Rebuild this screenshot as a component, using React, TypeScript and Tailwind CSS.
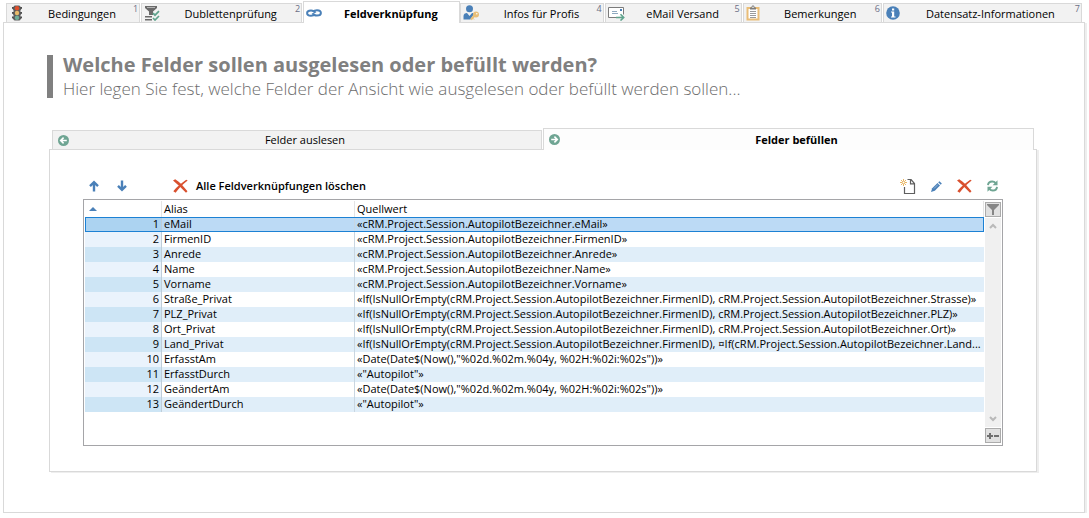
import { useState, type ReactNode } from "react";

type Tab = { label: string; icon: ReactNode };

function TrafficLightIcon() {
  return (
    <svg width="16" height="16" viewBox="0 0 16 16" className="shrink-0">
      <path d="M3 2h2v3.200L3 3.400zM3 7h2v3L3 8.400zM3 11.500h2v3l-2-1.600zM13 2h-2v3.200l2-1.800zM13 7h-2v3l2-1.600zM13 11.500h-2v3l2-1.600z" fill="#4d4d4d" />
      <rect x="4.500" y="0.500" width="7" height="15" rx="1.500" fill="#5e5e5e" />
      <circle cx="8" cy="3.200" r="2.200" fill="#e04f2c" />
      <circle cx="8" cy="8" r="2.200" fill="#e9bb6a" />
      <circle cx="8" cy="12.800" r="2.200" fill="#6fae98" />
    </svg>
  );
}

function FilterCheckIcon() {
  return (
    <svg width="16" height="16" viewBox="0 0 16 16" className="shrink-0">
      <path d="M1 1h12v2L9 6.500V10H5V6.500L1 3z" fill="#6a6a6a" />
      <path d="M3 2h8v1H3z" fill="#b5b5b5" />
      <path d="M1 11h7v1.500H1zM1 14h7v1.500H1z" fill="#6a6a6a" />
      <path d="M9 8.200l2 2 4-4M9 13l2 2 4-4" fill="none" stroke="#5fa38d" strokeWidth="1.700" />
    </svg>
  );
}

function LinkIcon() {
  return (
    <svg width="16" height="16" viewBox="0 0 16 16" className="shrink-0">
      <g fill="none" stroke="#4a80b8" strokeWidth="2">
        <path d="M9 9.200C8.200 10.200 7 10.800 5 10.800 2.500 10.800 1.100 9.800 1.100 8S2.500 5.400 5 5.400c2.200 0 3.400.6 4.500 2.400" />
        <path d="M7 6.800C7.800 5.800 9 5.200 11 5.200c2.500 0 3.900 1 3.900 2.800s-1.400 2.600-3.900 2.600c-2.200 0-3.400-.6-4.500-2.400" />
      </g>
    </svg>
  );
}

function UserKeyIcon() {
  return (
    <svg width="17" height="16" viewBox="0 0 17 16" className="shrink-0">
      <circle cx="6.500" cy="3.800" r="3.500" fill="#4a80b8" />
      <path d="M.5 14.500V11C.5 9 2 8 4 8l2.500 3L9 8c1 0 1.500.3 2 .7L7.500 14.500z" fill="#4a80b8" />
      <circle cx="13" cy="9.500" r="3" fill="#e9bf78" />
      <circle cx="13.800" cy="8.700" r=".8" fill="#fff" />
      <path d="M11.500 10.500L8 14.500" stroke="#e9bf78" strokeWidth="2" />
      <path d="M9.500 13l1.500 1.500" stroke="#e9bf78" />
    </svg>
  );
}

function MailSendIcon() {
  return (
    <svg width="17" height="16" viewBox="0 0 17 16" className="shrink-0">
      <path d="M8 12.500H.5v-10h15v7" fill="#fff" stroke="#7b7b7b" />
      <path d="M12 4h2v2h-2z" fill="#4a80b8" />
      <path d="M4 6.500h5M4 8.500h6" stroke="#8fa9c0" />
      <path d="M8 12.500h7M12.500 9.300l3.200 3.200-3.200 3" fill="none" stroke="#5fa38d" strokeWidth="1.600" />
    </svg>
  );
}

function ClipboardIcon() {
  return (
    <svg width="14" height="16" viewBox="0 0 14 16" className="shrink-0">
      <path d="M1.500 3h11v11.500h-11z" fill="#fff" stroke="#e9bd78" strokeWidth="2" />
      <path d="M4 4.500V2.500h1.500C5.500 1 6 .5 7 .5s1.500.5 1.500 2H10v2z" fill="#7d7d7d" />
      <circle cx="7" cy="2.300" r=".8" fill="#fff" />
      <path d="M4 6.500h6M4 8.500h6M4 10.500h6M4 12.500h6" stroke="#9a9a9a" />
    </svg>
  );
}

function InfoIcon() {
  return (
    <svg width="14" height="14" viewBox="0 0 14 14" className="shrink-0">
      <circle cx="7" cy="7" r="6.800" fill="#4a80b8" />
      <path d="M6 2.500h2.200v2H6zM5 5.500h3.200v5H9.500v1H5v-1h1v-4H5z" fill="#fff" />
    </svg>
  );
}

function CircleArrowIcon({ back = false }: { back?: boolean }) {
  return (
    <svg width="11" height="11" viewBox="0 0 11 11" className="shrink-0">
      <circle cx="5.500" cy="5.500" r="5.500" fill="#6fa593" />
      <path
        d={back ? "M8.800 5.500H3M5.600 2.600L2.700 5.500l2.900 2.900" : "M2.200 5.500H8M5.400 2.600l2.900 2.900-2.900 2.900"}
        fill="none"
        stroke="#fff"
        strokeWidth="1.600"
      />
    </svg>
  );
}

function ArrowIcon({ down = false }: { down?: boolean }) {
  return (
    <svg width="10" height="12" viewBox="0 0 10 12">
      <path
        d={down ? "M5 .5v9M1 5.800l4 4 4-4" : "M5 11.500v-9M1 6.200l4-4 4 4"}
        fill="none"
        stroke="#4a80b8"
        strokeWidth="2.400"
      />
    </svg>
  );
}

function DeleteIcon() {
  return (
    <svg width="15" height="14" viewBox="0 0 15 14">
      <path d="M0 1.500L2.200.2C6.500 2.800 10.500 7.200 14.500 12.300l-1.500 1.500C9.200 9.800 4.500 5.200 0 1.500z" fill="#d9502e" />
      <path d="M14.700 1.500L13.200.7C9 3.500 3.500 8 .3 12.300l2.300 1.500C5.500 9.600 9.500 5.300 14.700 1.500z" fill="#d9502e" />
    </svg>
  );
}

function NewIcon() {
  return (
    <svg width="16" height="15" viewBox="0 0 16 15">
      <path d="M4.500 8v6.500h10V4.500l-3.500-4H7.500M10.500.8v4h4" fill="none" stroke="#5f5f5f" strokeWidth="1.200" />
      <path d="M3.500 0v7M0 3.500h7M1 1l5 5M6 1L1 6" stroke="#e9b765" />
      <circle cx="3.500" cy="3.500" r="1" fill="#fff" />
    </svg>
  );
}

function PencilIcon() {
  return (
    <svg width="11" height="11" viewBox="0 0 11 11">
      <path d="M0 11l1.200-3.800L6.500 2 9 4.500 3.800 9.800z" fill="#4a80b8" />
      <path d="M7.200 1.300L8.500.2l2.300 2.300-1.100 1.300z" fill="#4a80b8" />
      <path d="M3 7.500l4-4" stroke="#a9c4de" strokeWidth=".8" />
    </svg>
  );
}

function RefreshIcon() {
  return (
    <svg width="11" height="12" viewBox="0 0 11 12">
      <g fill="none" stroke="#6fa593" strokeWidth="1.900">
        <path d="M1 5.200C1.200 2.800 3 1.500 5.200 1.500c1.500 0 2.600.6 3.500 1.700" />
        <path d="M10 6.800C9.800 9.200 8 10.500 5.800 10.500c-1.500 0-2.600-.6-3.500-1.700" />
      </g>
      <path d="M10.500.3v4.900H5.600zM.5 11.700V6.800h4.900z" fill="#6fa593" />
    </svg>
  );
}

const TABS: Tab[] = [
  { label: "Bedingungen", icon: <TrafficLightIcon /> },
  { label: "Dublettenprüfung", icon: <FilterCheckIcon /> },
  { label: "Feldverknüpfung", icon: <LinkIcon /> },
  { label: "Infos für Profis", icon: <UserKeyIcon /> },
  { label: "eMail Versand", icon: <MailSendIcon /> },
  { label: "Bemerkungen", icon: <ClipboardIcon /> },
  { label: "Datensatz-Informationen", icon: <InfoIcon /> }
];

const FIELD_TABS: Tab[] = [
  { label: "Felder auslesen", icon: <CircleArrowIcon back /> },
  { label: "Felder befüllen", icon: <CircleArrowIcon /> }
];

const ROWS = [
  ["eMail", "«cRM.Project.Session.AutopilotBezeichner.eMail»"],
  ["FirmenID", "«cRM.Project.Session.AutopilotBezeichner.FirmenID»"],
  ["Anrede", "«cRM.Project.Session.AutopilotBezeichner.Anrede»"],
  ["Name", "«cRM.Project.Session.AutopilotBezeichner.Name»"],
  ["Vorname", "«cRM.Project.Session.AutopilotBezeichner.Vorname»"],
  ["Straße_Privat", "«If(IsNullOrEmpty(cRM.Project.Session.AutopilotBezeichner.FirmenID), cRM.Project.Session.AutopilotBezeichner.Strasse)»"],
  ["PLZ_Privat", "«If(IsNullOrEmpty(cRM.Project.Session.AutopilotBezeichner.FirmenID), cRM.Project.Session.AutopilotBezeichner.PLZ)»"],
  ["Ort_Privat", "«If(IsNullOrEmpty(cRM.Project.Session.AutopilotBezeichner.FirmenID), cRM.Project.Session.AutopilotBezeichner.Ort)»"],
  ["Land_Privat", "«If(IsNullOrEmpty(cRM.Project.Session.AutopilotBezeichner.FirmenID), ¤If(cRM.Project.Session.AutopilotBezeichner.Land..."],
  ["ErfasstAm", "«Date(Date$(Now(),\"%02d.%02m.%04y, %02H:%02i:%02s\"))»"],
  ["ErfasstDurch", "«\"Autopilot\"»"],
  ["GeändertAm", "«Date(Date$(Now(),\"%02d.%02m.%04y, %02H:%02i:%02s\"))»"],
  ["GeändertDurch", "«\"Autopilot\"»"]
];

function FieldTable() {
  const [selected, setSelected] = useState(0);

  return (
    <div className="flex border border-[#a5a5a8] p-px">
      <div className="min-w-0 flex-1 pb-8">
        <table className="w-full table-fixed border-separate border-spacing-0 text-[11px] leading-[13px] whitespace-nowrap">
          <colgroup>
            <col className="w-[77px]" />
            <col className="w-[193px]" />
            <col />
          </colgroup>
          <thead>
            <tr className="h-4 text-left">
              <th scope="col" aria-label="Nr." className="border-r border-[#e4e4e4] px-1 py-0">
                <svg width="8" height="4" viewBox="0 0 8 4">
                  <path d="M4 0l4 4H0z" fill="#4a80b8" />
                </svg>
              </th>
              <th scope="col" className="border-r border-[#e4e4e4] px-0.5 pt-0 pb-0.5 font-normal">Alias</th>
              <th scope="col" className="border-r border-[#e4e4e4] px-0.5 pt-0 pb-0.5 font-normal">Quellwert</th>
            </tr>
          </thead>
          <tbody>
            {ROWS.map(([alias, value], i) => {
              const active = i === selected;
              const striped = i % 2 === 0;
              return (
                <tr
                  key={alias}
                  onClick={() => setSelected(i)}
                  className={
                    active
                      ? "bg-[#bcdaf5] outline-1 -outline-offset-1 outline-[#1c81d4]"
                      : striped
                        ? "bg-[#e0eef9]"
                        : "bg-white"
                  }
                >
                  <td
                    className={[
                      "border-r border-[#bfcdd8] pt-0 pr-0.5 pb-0.5 pl-0 text-right",
                      active ? "bg-[#acd3f1]" : striped ? "bg-[#cde5f5]" : "bg-[#eaf3fc]"
                    ].join(" ")}
                  >
                    {i + 1}
                  </td>
                  <td className="border-r border-[#c9d6e1] px-0.5 pt-0 pb-0.5">{alias}</td>
                  <td className="overflow-hidden px-0.5 pt-0 pb-0.5">{value}</td>
                </tr>
              );
            })}
          </tbody>
        </table>
      </div>

      {/* Filter, scroll bar, add/remove */}
      <div className="ml-px flex w-4 flex-col gap-px py-px">
        <button aria-label="Filter" className="flex h-[15px] items-center justify-center border border-[#ababab] bg-[#e1e1e1]">
          <svg width="12" height="11" viewBox="0 0 12 11">
            <path d="M0 0h12v1L7 6v5H5V6L0 1z" fill="#868686" />
          </svg>
        </button>
        <div className="flex flex-1 flex-col items-center justify-between bg-[#f0f0f0] py-1">
          <svg width="8" height="8" viewBox="0 0 8 8">
            <path d="M1 6l3-3 3 3" fill="none" stroke="#b9b9b9" strokeWidth="2" />
          </svg>
          <svg width="8" height="8" viewBox="0 0 8 8">
            <path d="M1 2l3 3 3-3" fill="none" stroke="#b9b9b9" strokeWidth="2" />
          </svg>
        </div>
        <button aria-label="Spalten" className="flex h-[15px] items-center justify-center border border-[#ababab] bg-[#e1e1e1]">
          <svg width="12" height="6" viewBox="0 0 12 6">
            <path d="M2 0h2v2h2v2H4v2H2V4H0V2h2zM7 2h5v2H7z" fill="#707070" />
          </svg>
        </button>
      </div>
    </div>
  );
}

export default function App() {
  const [tab, setTab] = useState(2);
  const [fieldTab, setFieldTab] = useState(1);

  return (
    <div className="bg-white pr-1 pl-[3px] font-['Open_Sans','Noto_Sans',sans-serif] text-[11px] leading-4 text-black">
      <div role="tablist" className="grid grid-cols-[135fr_162fr_157fr_144fr_138fr_140fr_200fr] items-end pt-px pr-0.5 pl-[3px]">
        {TABS.map(({ label, icon }, i) => (
          <button
            key={label}
            role="tab"
            aria-selected={i === tab}
            onClick={() => setTab(i)}
            className={[
              "relative flex items-center border-[#d9d9d9] pl-0.5 whitespace-nowrap",
              i === tab
                ? "-mb-px h-[22px] border-x border-t bg-white font-bold"
                : "mr-px h-[19px] border-x border-t bg-[#f2f2f2]"
            ].join(" ")}
          >
            {icon}
            <span className="flex-1 pt-0.5 text-center">{label}</span>
            {i !== tab && (
              <span className="absolute top-0 right-px text-[9px] leading-[10px] text-[#6b6f86]">{i + 1}</span>
            )}
          </button>
        ))}
      </div>

      <main className="border border-[#d9d9d9] bg-white pt-8 pr-[47px] pb-10 pl-[45px] shadow-[2px_1px_0_#eeeeee]">
        <header className="-ml-0.5 border-l-6 border-[#808080] pl-2.5 text-[#808080]">
          <h1 className="text-xl leading-5 font-bold">Welche Felder sollen ausgelesen oder befüllt werden?</h1>
          <p className="pt-1 text-[17px] leading-[19px] font-light text-[#6c6c6c]">
            Hier legen Sie fest, welche Felder der Ansicht wie ausgelesen oder befüllt werden sollen...
          </p>
        </header>

        <div role="tablist" className="mt-[30px] grid grid-cols-2 items-end pr-[3px] pl-[3px]">
          {FIELD_TABS.map(({ label, icon }, i) => (
            <button
              key={label}
              role="tab"
              aria-selected={i === fieldTab}
              onClick={() => setFieldTab(i)}
              className={[
                "relative flex items-center border-x border-t border-[#d9d9d9] pl-[5px]",
                i === fieldTab ? "-mb-px h-[22px] bg-[#fdfdfd] font-bold" : "mr-px h-[19px] bg-[#f2f2f2]"
              ].join(" ")}
            >
              {icon}
              <span className="flex-1 text-center">{label}</span>
            </button>
          ))}
        </div>

        <section className="border border-[#d9d9d9] bg-white px-[33px] pt-7 pb-[25px] shadow-[2px_1px_0_#eeeeee]">
          <div className="flex h-[21px] items-start">
            <div className="flex h-4 flex-1 items-center pl-1.5">
              <button aria-label="Nach oben" className="mr-[18px]"><ArrowIcon /></button>
              <button aria-label="Nach unten"><ArrowIcon down /></button>
              <button className="ml-[46px] flex items-center gap-2 font-semibold">
                <DeleteIcon />
                Alle Feldverknüpfungen löschen
              </button>
            </div>
            <div className="flex h-4 items-center gap-[15px] pr-[5px]">
              <button aria-label="Neu"><NewIcon /></button>
              <button aria-label="Bearbeiten"><PencilIcon /></button>
              <button aria-label="Löschen"><DeleteIcon /></button>
              <button aria-label="Aktualisieren"><RefreshIcon /></button>
            </div>
          </div>
          <FieldTable />
        </section>
      </main>
    </div>
  );
}
